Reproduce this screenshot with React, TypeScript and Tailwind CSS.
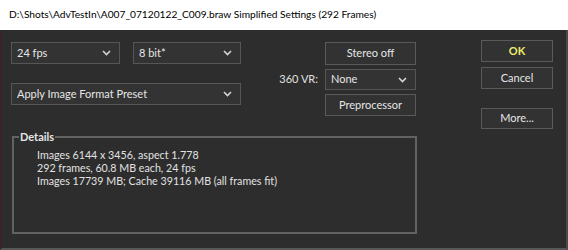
import type { ReactNode } from 'react'

function Chevron() {
  return (
    <svg width="9" height="6" viewBox="0 0 9 6" className="shrink-0">
      <polyline points="1,1 4.5,4.5 8,1" fill="none" stroke="#d4d4d4" strokeWidth="1.6" />
    </svg>
  )
}

function Select({ label, className }: { label: string; className: string }) {
  return (
    <div
      className={`flex items-center justify-between border border-[#565656] bg-[#333333] pl-[5px] pr-[8px] text-[11px] text-[#e6e6e6] ${className}`}
    >
      <span>{label}</span>
      <Chevron />
    </div>
  )
}

function Button({ children, className, accent }: { children: ReactNode; className: string; accent?: boolean }) {
  return (
    <div
      className={`flex items-center justify-center border border-[#5a5a5a] bg-[#323232] text-[11px] ${
        accent ? 'font-bold text-[#ecec6e]' : 'text-[#e6e6e6]'
      } ${className}`}
    >
      {children}
    </div>
  )
}

export default function App() {
  return (
    <div className="flex h-[250px] w-[568px] flex-col overflow-hidden font-['Lato',sans-serif]">
      <div className="flex h-[30px] shrink-0 items-center bg-white pl-[9px] text-[10.2px] text-[#000]">
        D:\Shots\AdvTestIn\A007_07120122_C009.braw Simplified Settings (292 Frames)
      </div>

      <div className="flex flex-1 flex-col border-b-2 border-l-2 border-r-2 border-b-[#575757] border-l-[#3a2426] border-r-[#4a4a4a] bg-[#2d2d2d]">
        <div className="flex h-[99px] shrink-0">
          <div className="ml-[9px] flex w-[230px] flex-col gap-[19px] pt-[12px]">
            <div className="flex gap-[13px]">
              <Select label="24 fps" className="h-[22px] w-[109px]" />
              <Select label="8 bit*" className="h-[22px] w-[108px]" />
            </div>
            <Select label="Apply Image Format Preset" className="h-[22px] w-[230px]" />
          </div>

          <div className="ml-[34px] flex w-[141px] flex-col items-end gap-[4px] pt-[12px]">
            <Button className="h-[23px] w-[91px]">Stereo off</Button>
            <div className="flex items-center gap-[7px]">
              <span className="whitespace-nowrap text-[11px] text-[#e0e0e0]">360 VR:</span>
              <Select label="None" className="h-[21px] w-[91px]" />
            </div>
            <Button className="h-[22px] w-[91px]">Preprocessor</Button>
          </div>

          <div className="ml-[65px] flex w-[72px] flex-col pt-[10px]">
            <Button accent className="h-[22px] w-[72px]">OK</Button>
            <Button className="mt-[5px] h-[22px] w-[72px]">Cancel</Button>
            <Button className="mt-[19px] h-[21px] w-[72px]">More...</Button>
          </div>
        </div>

        <fieldset className="ml-[10px] h-[105px] w-[405px] border-2 border-[#626262] px-[5px]">
          <legend className="px-[1px] text-[11px] font-bold text-[#e6e6e6]">Details</legend>
          <div className="pl-[18px] pt-[2px] text-[10.7px] leading-[13px] text-[#e2e2e2]">
            <div>Images 6144 x 3456, aspect 1.778</div>
            <div>292 frames, 60.8 MB each, 24 fps</div>
            <div>Images 17739 MB; Cache 39116 MB (all frames fit)</div>
          </div>
        </fieldset>
      </div>
    </div>
  )
}
